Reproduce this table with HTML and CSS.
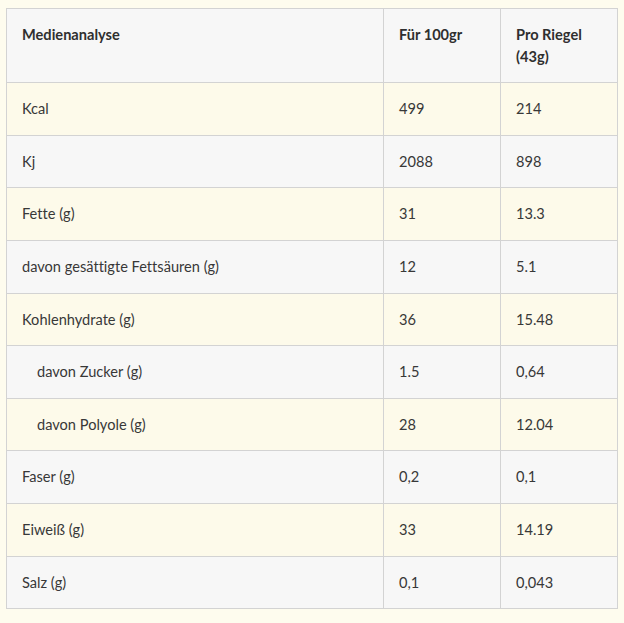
FILE: index.html
```html
<!DOCTYPE html>
<html lang="de">
<head>
<meta charset="utf-8">
<title>Medienanalyse</title>
<link rel="stylesheet" href="styles.css">
</head>
<body>
<div class="wrap">
<table class="nutri">
  <colgroup>
    <col class="c-name">
    <col class="c-val">
    <col class="c-val">
  </colgroup>
  <thead>
    <tr><th>Medienanalyse</th><th>Für 100gr</th><th>Pro Riegel<br>(43g)</th></tr>
  </thead>
  <tbody>
    <tr class="cream"><td>Kcal</td><td>499</td><td>214</td></tr>
    <tr class="gray"><td>Kj</td><td>2088</td><td>898</td></tr>
    <tr class="cream"><td>Fette (g)</td><td>31</td><td>13.3</td></tr>
    <tr class="gray"><td>davon gesättigte Fettsäuren (g)</td><td>12</td><td>5.1</td></tr>
    <tr class="cream"><td>Kohlenhydrate (g)</td><td>36</td><td>15.48</td></tr>
    <tr class="gray"><td class="sub">davon Zucker (g)</td><td>1.5</td><td>0,64</td></tr>
    <tr class="cream"><td class="sub">davon Polyole (g)</td><td>28</td><td>12.04</td></tr>
    <tr class="gray"><td>Faser (g)</td><td>0,2</td><td>0,1</td></tr>
    <tr class="cream"><td>Eiweiß (g)</td><td>33</td><td>14.19</td></tr>
    <tr class="gray"><td>Salz (g)</td><td>0,1</td><td>0,043</td></tr>
  </tbody>
</table>
</div>
</body>
</html>
```
FILE: styles.css
```css
html, body {
  margin: 0;
  padding: 0;
  background: #fefcee;
}
.wrap {
  padding: 8px 6px;
}
.nutri {
  width: 612px;
  border-collapse: collapse;
  table-layout: fixed;
  font-family: "Lato", "Liberation Sans", sans-serif;
  font-size: 14.6px;
  line-height: 21.6px;
  color: #383838;
  font-variant-ligatures: none;
}
.c-name { width: 377px; }
.c-val { width: 117px; }
.nutri th,
.nutri td {
  border: 1px solid #d3d3d3;
  padding: 15px;
  text-align: left;
  vertical-align: top;
}
.nutri th {
  font-weight: 700;
  background: #f7f7f7;
  color: #2f2f2f;
}
.nutri td { vertical-align: middle; }
.cream td { background: #fdfaea; }
.gray td { background: #f7f7f7; }
.nutri td.sub { padding-left: 30px; }
```
